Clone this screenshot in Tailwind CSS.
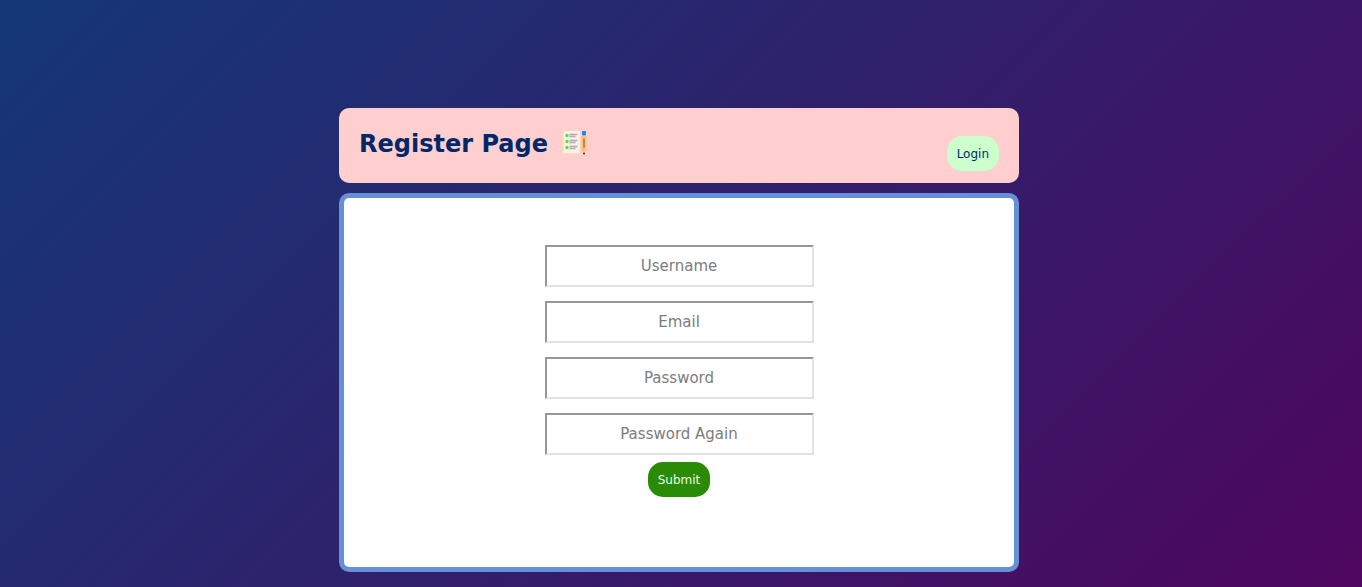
<!DOCTYPE html>
<html lang="en">
<head>
<meta charset="utf-8">
<meta name="viewport" content="width=device-width, initial-scale=1">
<title>Register Page</title>
<script src="https://cdn.jsdelivr.net/npm/@tailwindcss/browser@4"></script>
</head>
<body class="min-h-screen bg-[linear-gradient(135deg,#143878,#30206b_50%,#4e065f)] pt-27 pr-1 pb-[15px] font-['DejaVu_Sans',sans-serif]">
<div class="mx-auto flex w-full max-w-[680px] flex-col gap-2.5">
  <header class="flex justify-between rounded-[10px] bg-[#ffcfcf] px-5 pb-3">
    <h1 class="flex items-center gap-3.5 pt-5 pb-[11px] text-2xl leading-8 font-bold text-[#002868]">
      Register Page
      <svg class="h-7 w-[26px] shrink-0" viewBox="0 1 26 28" aria-hidden="true">
        <path d="M0 5l3-1v22H0z" fill="#ffd8c0"/>
        <path d="M0 4h17v21H1z" fill="#fbdcc4"/>
        <path d="M2 2h16v22H2z" fill="#faf0e5"/>
        <g fill="#4fe63c"><circle cx="5" cy="6.500" r="1.7"/><circle cx="5" cy="12.500" r="1.7"/><circle cx="5" cy="18.500" r="1.7"/></g>
        <path d="M7.500 5.500h8M7.500 7.500h6M7.500 11.500h8M7.500 13.500h6M7.500 17.500h8M7.500 19.500h6" stroke="#b8a7b5" stroke-width="1.3"/>
        <rect x="20" y="2" width="4" height="4.500" rx="1" fill="#168cef"/>
        <path d="M19.500 7h5v15.500h-5z" fill="#ffc070"/>
        <path d="M22 9.500v9" stroke="#806645" stroke-width="1.2"/>
        <path d="M19.500 22.500h5l-1.500 2h-2z" fill="#f7caa8"/>
        <circle cx="22" cy="24.500" r="1" fill="#4b3042"/>
      </svg>
    </h1>
    <button type="button" class="h-[35px] self-end rounded-[15px] bg-[#ccffcc] px-2.5 text-xs text-[#002868]">Login</button>
  </header>
  <main class="rounded-[10px] border-5 border-[#658fd6] bg-white px-5 pt-[47px] pb-[70px]">
    <form class="flex flex-col items-center gap-[7px]">
      <div class="flex w-full max-w-[269px] flex-col gap-3.5 text-[15px]">
        <input type="text" aria-label="Username" placeholder="Username" class="h-[42px] w-full border-2 border-t-[#969696] border-r-[#e3e3e3] border-b-[#e3e3e3] border-l-[#969696] text-center placeholder:text-[#7c7c7c]">
        <input type="email" aria-label="Email" placeholder="Email" class="h-[42px] w-full border-2 border-t-[#969696] border-r-[#e3e3e3] border-b-[#e3e3e3] border-l-[#969696] text-center placeholder:text-[#7c7c7c]">
        <input type="password" aria-label="Password" placeholder="Password" class="h-[42px] w-full border-2 border-t-[#969696] border-r-[#e3e3e3] border-b-[#e3e3e3] border-l-[#969696] text-center placeholder:text-[#7c7c7c]">
        <input type="password" aria-label="Password Again" placeholder="Password Again" class="h-[42px] w-full border-2 border-t-[#969696] border-r-[#e3e3e3] border-b-[#e3e3e3] border-l-[#969696] text-center placeholder:text-[#7c7c7c]">
      </div>
      <button type="submit" class="h-[35px] rounded-[15px] bg-[#298b06] px-2.5 text-xs text-[#e8ffe8]">Submit</button>
    </form>
  </main>
</div>
</body>
</html>
